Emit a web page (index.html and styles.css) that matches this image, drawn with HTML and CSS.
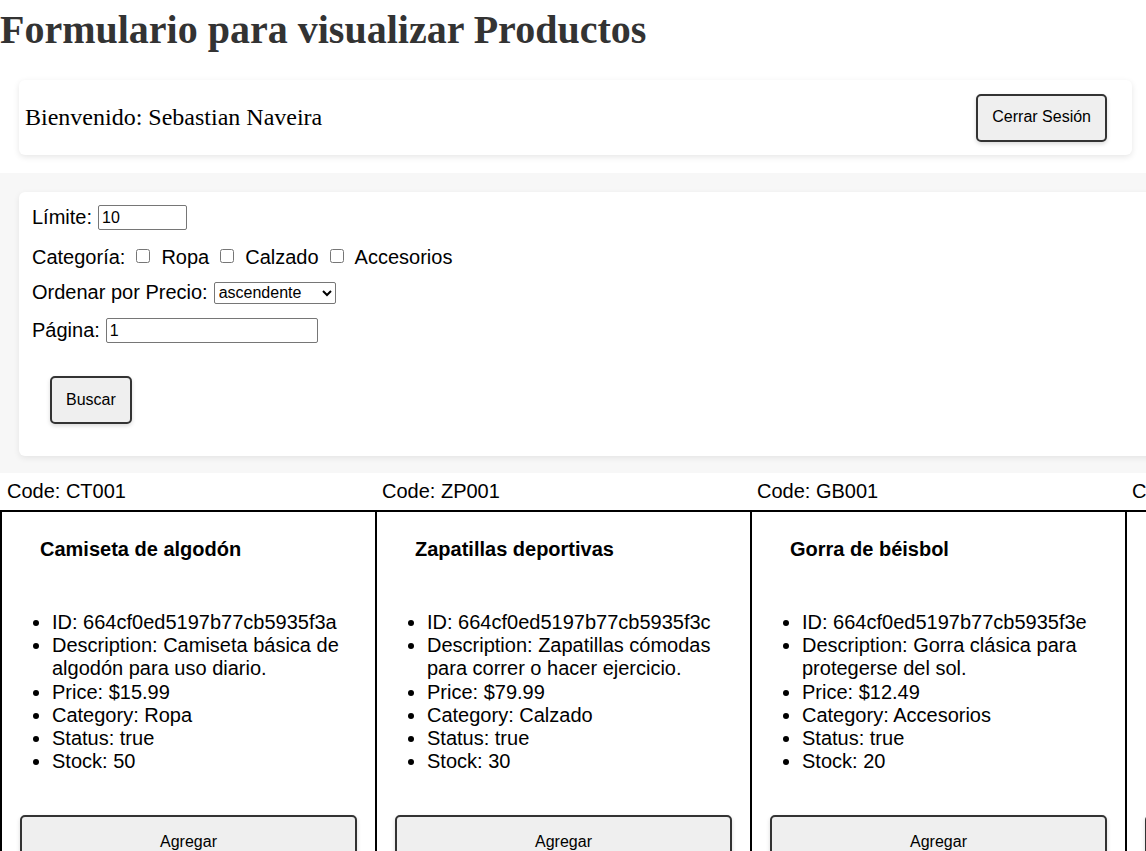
FILE: index.html
```html
<!DOCTYPE html>
<html lang="es">
<head>
<meta charset="utf-8">
<title>Formulario para visualizar Productos</title>
<link rel="stylesheet" href="styles.css">
</head>
<body>
<h1 class="title">Formulario para visualizar Productos</h1>

<div class="header-card">
  <span class="welcome">Bienvenido: Sebastian Naveira</span>
  <button class="btn btn-logout" type="button">Cerrar Sesión</button>
</div>

<section class="filters">
  <form class="filter-card">
    <div class="row">
      <label for="limit">Límite:</label>
      <input id="limit" class="input input-limit" type="text" value="10">
    </div>
    <div class="row row-cats">
      <span>Categoría:</span>
      <input class="check" type="checkbox" id="c1"><label for="c1">Ropa</label>
      <input class="check" type="checkbox" id="c2"><label for="c2">Calzado</label>
      <input class="check" type="checkbox" id="c3"><label for="c3">Accesorios</label>
    </div>
    <div class="row">
      <label for="sort">Ordenar por Precio:</label>
      <select id="sort" class="select">
        <option>ascendente</option>
        <option>descendente</option>
      </select>
    </div>
    <div class="row">
      <label for="page">Página:</label>
      <input id="page" class="input input-page" type="text" value="1">
    </div>
    <button class="btn btn-search" type="button">Buscar</button>
  </form>
</section>

<section class="products">
  <div class="col">
    <div class="code">Code: CT001</div>
    <div class="card">
      <h3 class="card-title">Camiseta de algodón</h3>
      <ul class="props">
        <li>ID: 664cf0ed5197b77cb5935f3a</li>
        <li>Description: Camiseta básica de algodón para uso diario.</li>
        <li>Price: $15.99</li>
        <li>Category: Ropa</li>
        <li>Status: true</li>
        <li>Stock: 50</li>
      </ul>
      <button class="btn btn-add" type="button">Agregar</button>
    </div>
  </div>
  <div class="col">
    <div class="code">Code: ZP001</div>
    <div class="card">
      <h3 class="card-title">Zapatillas deportivas</h3>
      <ul class="props">
        <li>ID: 664cf0ed5197b77cb5935f3c</li>
        <li>Description: Zapatillas cómodas para correr o hacer ejercicio.</li>
        <li>Price: $79.99</li>
        <li>Category: Calzado</li>
        <li>Status: true</li>
        <li>Stock: 30</li>
      </ul>
      <button class="btn btn-add" type="button">Agregar</button>
    </div>
  </div>
  <div class="col">
    <div class="code">Code: GB001</div>
    <div class="card">
      <h3 class="card-title">Gorra de béisbol</h3>
      <ul class="props">
        <li>ID: 664cf0ed5197b77cb5935f3e</li>
        <li>Description: Gorra clásica para protegerse del sol.</li>
        <li>Price: $12.49</li>
        <li>Category: Accesorios</li>
        <li>Status: true</li>
        <li>Stock: 20</li>
      </ul>
      <button class="btn btn-add" type="button">Agregar</button>
    </div>
  </div>
  <div class="col">
    <div class="code">Code: CH001</div>
    <div class="card">
      <h3 class="card-title">Chaqueta de cuero</h3>
      <ul class="props">
        <li>ID: 664cf0ed5197b77cb5935f40</li>
        <li>Description: Chaqueta de cuero para el invierno.</li>
        <li>Price: $99.99</li>
        <li>Category: Ropa</li>
        <li>Status: true</li>
        <li>Stock: 10</li>
      </ul>
      <button class="btn btn-add" type="button">Agregar</button>
    </div>
  </div>
</section>
</body>
</html>
```

FILE: styles.css
```css
html {
  overflow-y: hidden;
}

body {
  margin: 0;
  font-family: "Liberation Sans", Arial, sans-serif;
  color: #000;
  background: #fff;
  width: 1502px;
}

.title {
  font-family: "Liberation Serif", "Times New Roman", serif;
  font-size: 40px;
  font-weight: bold;
  color: #333;
  margin: 7px 0 27px 0;
  line-height: 46px;
  white-space: nowrap;
}

.header-card {
  width: 1113px;
  box-sizing: border-box;
  height: 75px;
  margin: 0 0 18px 19px;
  padding: 0 25px 0 6px;
  background: #fff;
  border-radius: 6px;
  box-shadow: 0 2px 6px rgba(0, 0, 0, 0.1);
  display: flex;
  align-items: center;
  justify-content: space-between;
}

.welcome {
  font-family: "Liberation Serif", "Times New Roman", serif;
  font-size: 24px;
}

.btn {
  font-family: "Liberation Sans", Arial, sans-serif;
  font-size: 16px;
  line-height: 18px;
  color: #000;
  background: #efefef;
  border: 2px solid #333;
  border-radius: 5px;
  padding: 13px 14px;
  box-shadow: 0 2px 4px rgba(0, 0, 0, 0.15);
  cursor: pointer;
}

.btn-logout {
  padding: 12px 14px 14px 14px;
}

.filters {
  background: #f7f7f7;
  padding: 19px 0 17px 19px;
}

.filter-card {
  background: #fff;
  border-radius: 6px;
  box-shadow: 0 2px 6px rgba(0, 0, 0, 0.08);
  padding: 13px 13px 33px 13px;
  display: flex;
  flex-direction: column;
  align-items: flex-start;
  gap: 14px;
  font-size: 20px;
  height: 264px;
  box-sizing: border-box;
}

.row {
  display: flex;
  align-items: center;
  gap: 6px;
  line-height: 23px;
}

.row-cats {
  gap: 0;
  padding-top: 2px;
  margin-bottom: -2px;
}

.check {
  width: 14px;
  height: 14px;
  margin: 0 11px;
  position: relative;
  top: -2px;
}

.input {
  box-sizing: border-box;
  height: 25px;
  font-family: "Liberation Sans", Arial, sans-serif;
  font-size: 16px;
  padding: 1px 3px;
  border: 1px solid #767676;
  border-radius: 2px;
}

.input-limit {
  width: 89px;
}

.input-page {
  width: 212px;
}

.select {
  box-sizing: border-box;
  width: 122px;
  height: 22px;
  font-family: "Liberation Sans", Arial, sans-serif;
  font-size: 16px;
  border: 1px solid #767676;
  border-radius: 2px;
  background: #fff;
}

.btn-search {
  margin: 19px 0 0 18px;
}

.products {
  display: flex;
  width: 1502px;
}

.col {
  width: 375px;
  flex-shrink: 0;
}

.code {
  font-size: 20px;
  line-height: 23px;
  padding: 7px 7px;
}

.card {
  border: 2px solid #000;
  margin-right: -2px;
  padding: 0 10px 0 10px;
  height: 400px;
}

.card-title {
  font-size: 20px;
  line-height: 23px;
  font-weight: bold;
  margin: 26px 0 0 0;
  padding-left: 28px;
}

.props {
  margin: 50px 0 0 0;
  padding-left: 40px;
  font-size: 20px;
  line-height: 23.2px;
}

.btn-add {
  display: block;
  width: 337px;
  padding: 16px 14px;
  margin: 42px auto 0 auto;
}
```
